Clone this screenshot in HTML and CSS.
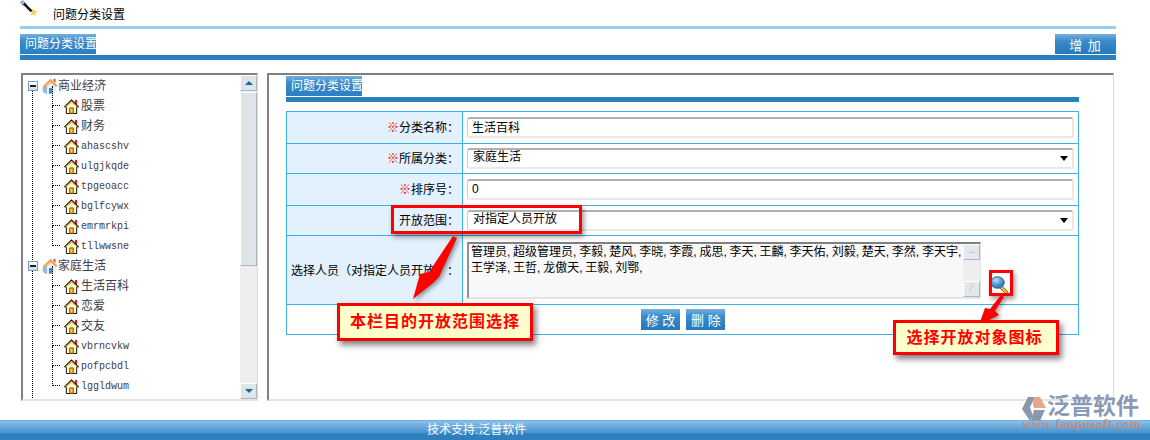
FILE: index.html
```html
<!DOCTYPE html>
<html lang="zh-CN">
<head>
    <meta charset="UTF-8">
    <title>问题分类设置</title>
    <link rel="stylesheet" href="styles.css">
</head>
<body>
    <svg class="icon-defs" width="0" height="0">
        <symbol id="house" viewBox="0 0 16 16">
            <path d="M11.500 1h2.500v5h-2.500z" fill="#d8202c"/>
            <path d="M2.500 8v7.500h11V8L8 3z" fill="#fff8d8" stroke="#000" stroke-width="1"/>
            <path d="M.5 8.800 8 1.300l7.500 7.500" fill="none" stroke="#000" stroke-width="1.600"/>
            <path d="M2 8.500 8 2.700l6 5.800" fill="none" stroke="#f9d040" stroke-width="1.200"/>
            <path d="M6 9.500h4v6H6z" fill="#f2a20c" stroke="#6a4400" stroke-width=".8"/>
            <path d="M7.200 11h1.600v2.500H7.200z" fill="#ffe878"/>
        </symbol>
        <symbol id="home" viewBox="0 0 16 16">
            <path d="M2 8v6.500L7 16l7-2V7L8 2.500z" fill="#e6effa"/>
            <path d="M2 8c-2 2.500-2 5 0 7l3 1V8z" fill="#8fbbe8"/>
            <path d="M7 16v-6h3.500v5z" fill="#3f86cf"/>
            <path d="M.5 8.500 8.500.8 15.500 7.500 14 9 8.500 4 2.500 10z" fill="#f2a050"/>
            <path d="M4 7.500 8.500 3.500l1 1L5 9z" fill="#f8c890"/>
            <path d="M11.500 1h2v4l-2-2z" fill="#d8503c"/>
        </symbol>
    </svg>

    <div class="page-title">
        <svg class="wand" width="18" height="18" viewBox="0 0 18 18">
            <path d="M.5 2.500 2.500.5 5.500 3 3 5.500z" fill="#a8c4e4" stroke="#506080" stroke-width=".6"/>
            <path d="M3 4.500l1.800-1.800 7.700 7.700-1.800 1.800z" fill="#101018"/>
            <path d="M13.500 8.500l1 2.500 3-.3-2.300 2 1 3-2.800-1.800-2.400 1.500.6-2.800z" fill="#f8c030"/>
            <path d="M13.300 11l.8 1.300 1-.2-1 1.200-1.300-.5z" fill="#fff2b0"/>
        </svg>
        <span>问题分类设置</span>
    </div>
    <div class="light-rule"></div>

    <div class="head-row">
        <div class="tab">问题分类设置</div>
        <button class="blue-btn add-btn">增 加</button>
    </div>
    <div class="blue-rule"></div>

    <div class="main">
        <div class="panel tree-panel">
            <div class="tree">
                <div class="tree-group">
                    <div class="tree-root">
                        <span class="minus"></span>
                        <svg class="root-icon"><use href="#home"/></svg>
                        <span>商业经济</span>
                    </div>
                    <div class="tree-item"><svg class="leaf-icon"><use href="#house"/></svg><span>股票</span></div>
                    <div class="tree-item"><svg class="leaf-icon"><use href="#house"/></svg><span>财务</span></div>
                    <div class="tree-item"><svg class="leaf-icon"><use href="#house"/></svg><span class="latin">ahascshv</span></div>
                    <div class="tree-item"><svg class="leaf-icon"><use href="#house"/></svg><span class="latin">ulgjkqde</span></div>
                    <div class="tree-item"><svg class="leaf-icon"><use href="#house"/></svg><span class="latin">tpgeoacc</span></div>
                    <div class="tree-item"><svg class="leaf-icon"><use href="#house"/></svg><span class="latin">bglfcywx</span></div>
                    <div class="tree-item"><svg class="leaf-icon"><use href="#house"/></svg><span class="latin">emrmrkpi</span></div>
                    <div class="tree-item"><svg class="leaf-icon"><use href="#house"/></svg><span class="latin">tllwwsne</span></div>
                </div>
                <div class="tree-group">
                    <div class="tree-root">
                        <span class="minus"></span>
                        <svg class="root-icon"><use href="#home"/></svg>
                        <span>家庭生活</span>
                    </div>
                    <div class="tree-item"><svg class="leaf-icon"><use href="#house"/></svg><span>生活百科</span></div>
                    <div class="tree-item"><svg class="leaf-icon"><use href="#house"/></svg><span>恋爱</span></div>
                    <div class="tree-item"><svg class="leaf-icon"><use href="#house"/></svg><span>交友</span></div>
                    <div class="tree-item"><svg class="leaf-icon"><use href="#house"/></svg><span class="latin">vbrncvkw</span></div>
                    <div class="tree-item"><svg class="leaf-icon"><use href="#house"/></svg><span class="latin">pofpcbdl</span></div>
                    <div class="tree-item"><svg class="leaf-icon"><use href="#house"/></svg><span class="latin">lggldwum</span></div>
                </div>
            </div>
            <div class="scrollbar">
                <div class="scroll-btn"><i class="arrow-up"></i></div>
                <div class="scroll-thumb"></div>
                <div class="scroll-btn"><i class="arrow-down"></i></div>
            </div>
        </div>

        <div class="panel form-panel">
            <div class="tab">问题分类设置</div>
            <div class="blue-rule"></div>
            <table class="form-table">
                <tr class="row-tall">
                    <th><em>※</em>分类名称：</th>
                    <td><input class="field" type="text" value="生活百科"></td>
                </tr>
                <tr class="row-short">
                    <th><em>※</em>所属分类：</th>
                    <td><div class="field select-field">家庭生活<i class="select-arrow"></i></div></td>
                </tr>
                <tr class="row-tall">
                    <th><em>※</em>排序号：</th>
                    <td><input class="field" type="text" value="0"></td>
                </tr>
                <tr class="row-short">
                    <th>开放范围：</th>
                    <td><div class="field select-field">对指定人员开放<i class="select-arrow"></i></div></td>
                </tr>
                <tr class="row-members">
                    <th>选择人员（对指定人员开放）：</th>
                    <td>
                        <div class="member-cell">
                            <div class="member-box">
                                <div class="member-text">管理员, 超级管理员, 李毅, 楚风, 李晓, 李霞, 成思, 李天, 王麟, 李天佑, 刘毅, 楚天, 李然, 李天宇,
王学泽, 王哲, 龙傲天, 王毅, 刘鄂,</div>
                                <div class="box-scroll">
                                    <div class="box-btn">–</div>
                                    <div class="box-btn">⁄</div>
                                </div>
                            </div>
                            <svg class="search-icon" width="18" height="18" viewBox="0 0 18 18">
                                <defs>
                                    <radialGradient id="lens" cx=".4" cy=".3" r=".75">
                                        <stop offset="0" stop-color="#c4e2f8"/>
                                        <stop offset=".55" stop-color="#4a96d4"/>
                                        <stop offset="1" stop-color="#2a6aa8"/>
                                    </radialGradient>
                                </defs>
                                <path d="M11.500 11.500l4.500 4.500" stroke="#6a5a20" stroke-width="3.600" stroke-linecap="round"/>
                                <path d="M11.500 11.500l4.500 4.500" stroke="#eec840" stroke-width="2.200" stroke-linecap="round"/>
                                <ellipse cx="7.500" cy="6.500" rx="6.800" ry="5.800" fill="url(#lens)" stroke="#56646e" stroke-width="1"/>
                            </svg>
                        </div>
                    </td>
                </tr>
                <tr class="row-short">
                    <td class="actions" colspan="2">
                        <button class="blue-btn small-btn">修 改</button>
                        <button class="blue-btn small-btn">删 除</button>
                    </td>
                </tr>
            </table>
        </div>
    </div>

    <div class="footer">技术支持:泛普软件</div>

    <!-- annotations drawn over the screenshot -->
    <div class="mark mark-range"></div>
    <div class="mark mark-icon"></div>
    <svg class="arrows" width="1150" height="440">
        <polygon points="453,236 457,238 439,277 433,283 413,299 420,274 429,272" fill="#f00"/>
        <polygon points="1001,295 1004,297 995,311 999,315 979,325 985,308 990,309" fill="#f00"/>
    </svg>
    <div class="callout callout-range">本栏目的开放范围选择</div>
    <div class="callout callout-icon">选择开放对象图标</div>

    <div class="logo">
        <svg class="logo-mark" width="26" height="26" viewBox="0 0 26 26">
            <path d="M7 1h7L9 11l3 9-3 5-8-12z" fill="#8a98ac"/>
            <path d="M14 1h5l6 11-12 0c-2-5-1-8 1-11z" fill="#e8a888"/>
            <path d="M13 14h11l-5 11H10z" fill="#8a98ac"/>
        </svg>
        <div class="logo-name">泛普软件</div>
        <div class="logo-url">www.fanpusoft.com</div>
    </div>
</body>
</html>
```

FILE: styles.css
```css
body {
    margin: 0;
    height: 440px;
    overflow: hidden;
    position: relative;
    background: #fff;
    color: #000;
    font-family: "Liberation Sans", "Noto Sans CJK SC", sans-serif;
    font-size: 12px;
    text-spacing-trim: space-all;
    font-kerning: none;
}
.icon-defs {
    position: absolute;
}
.page-title {
    height: 26px;
    padding-left: 20px;
    display: flex;
    align-items: flex-start;
}
.page-title span {
    margin-left: 15px;
    line-height: 31px;
}
.wand {
    display: block;
}
.light-rule {
    height: 3px;
    margin: 0 34px 0 20px;
    background: #9ccbf0;
}
.head-row {
    display: flex;
    justify-content: space-between;
    margin: 5px 34px 1px 20px;
}
.tab {
    width: 76px;
    height: 20px;
    padding-left: 5px;
    box-sizing: border-box;
    line-height: 21px;
    color: #fff;
    white-space: nowrap;
    background: linear-gradient(#74afdd, #3a8bc9 35%, #2a80c4);
}
.blue-rule {
    height: 5px;
    margin: 0 34px 0 20px;
    background: #2980c0;
}
.blue-btn {
    display: block;
    padding: 0;
    border: 0;
    color: #fff;
    font-family: inherit;
    background: linear-gradient(#74afdd, #3a8bc9 35%, #2479bd);
}
.add-btn {
    width: 61px;
    height: 20px;
    font-size: 13px;
    letter-spacing: 1px;
}
.main {
    display: flex;
    gap: 9px;
    margin: 13px 36px 0 21px;
    height: 328px;
}
.panel {
    box-sizing: border-box;
    border-top: 2px solid #808080;
    border-left: 2px solid #808080;
    border-right: 1px solid #dcdcdc;
    border-bottom: 2px solid #e4e4e4;
}
.tree-panel {
    width: 237px;
    flex: none;
    display: flex;
    overflow: hidden;
}
.tree {
    flex: 1;
    padding: 1px 0 0 5px;
    color: #3c3c4c;
    overflow: hidden;
}
.tree-group {
    position: relative;
}
.tree-group::before {
    content: "";
    position: absolute;
    left: 4px;
    top: 15px;
    bottom: -6px;
    border-left: 1px dotted #000;
}
.tree-root {
    height: 20px;
    display: flex;
    align-items: center;
    position: relative;
}
.tree-root span:last-child,
.tree-item span {
    margin-bottom: 4px;
}
.tree-item .latin {
    margin-bottom: 0;
}
.minus {
    width: 10px;
    height: 10px;
    box-sizing: border-box;
    border: 1px solid #7a9cc6;
    background: linear-gradient(#fff, #c8d8ec);
    position: relative;
    flex: none;
}
.minus::after {
    content: "";
    position: absolute;
    left: 1px;
    right: 1px;
    top: 3px;
    border-top: 2px solid #222;
}
.root-icon {
    width: 16px;
    height: 16px;
    margin-left: 4px;
    flex: none;
}
.tree-item {
    height: 20px;
    padding-left: 36px;
    display: flex;
    align-items: center;
    position: relative;
}
.tree-item::before {
    content: "";
    position: absolute;
    left: 24px;
    top: -10px;
    width: 8px;
    height: 20px;
    border-left: 1px dotted #000;
    border-bottom: 1px dotted #000;
    box-sizing: border-box;
}
.leaf-icon {
    width: 15px;
    height: 15px;
    margin-right: 2px;
    flex: none;
}
.latin {
    font-family: "Liberation Mono", monospace;
    font-size: 10px;
}
.scrollbar {
    width: 17px;
    flex: none;
    display: flex;
    flex-direction: column;
    gap: 1px;
    background: #eee;
}
.scroll-btn {
    height: 16px;
    box-sizing: border-box;
    display: flex;
    align-items: center;
    justify-content: center;
    background: #dfe4e8;
    border: 1px solid #fff;
    border-right-color: #a9b7c2;
    border-bottom-color: #a9b7c2;
}
.scroll-thumb {
    height: 174px;
    margin-bottom: auto;
    background: #dfe4e8;
    border: 1px solid #fff;
    border-right-color: #a9b7c2;
    border-bottom-color: #a9b7c2;
    box-sizing: border-box;
}
.arrow-up {
    border: 4px solid transparent;
    border-top: 0;
    border-bottom: 4px solid #0a6ba0;
}
.arrow-down {
    border: 4px solid transparent;
    border-bottom: 0;
    border-top: 4px solid #0a6ba0;
}
.form-panel {
    flex: 1;
    padding-top: 1px;
    padding-left: 17px;
}
.form-panel .blue-rule {
    margin: 1px 34px 0 0;
}
.form-table {
    width: 793px;
    margin-top: 9px;
    table-layout: fixed;
    border-collapse: collapse;
}
.form-table th,
.form-table td {
    border: 1px solid #3eb0e4;
    padding: 0;
}
.form-table th {
    width: 176px;
    padding: 0 3px 2px 0;
    box-sizing: border-box;
    text-align: right;
    font-weight: normal;
    white-space: nowrap;
    background: #e3f1fd;
}
.form-table td {
    padding-left: 4px;
}
.form-table em {
    font-style: normal;
    color: #f00;
}
.row-tall {
    height: 32px;
}
.row-short {
    height: 30px;
}
.row-members {
    height: 69px;
}
.field {
    display: block;
    width: 607px;
    height: 21px;
    padding: 0 4px 2px;
    box-sizing: border-box;
    border-style: solid;
    border-width: 2px 2px 2px 1px;
    border-color: #b0b0b0 #e8e8e8 #e8e8e8 #ccc;
    border-radius: 3px;
    background: #fff;
    font-family: inherit;
    font-size: 12px;
    color: #000;
    line-height: 15px;
    outline: 0;
}
.select-field {
    position: relative;
    padding-left: 5px;
}
.select-arrow {
    position: absolute;
    right: 4px;
    top: 6px;
    border: 4px solid transparent;
    border-bottom: 0;
    border-top: 5px solid #000;
}
.member-cell {
    display: flex;
    align-items: flex-end;
}
.member-box {
    width: 514px;
    height: 57px;
    box-sizing: border-box;
    display: flex;
    border-style: solid;
    border-width: 2px 1px 2px 2px;
    border-color: #808080 #e4e4e4 #e4e4e4 #909090;
    background: #f8f8f8;
}
.member-text {
    flex: 1;
    padding: 0 0 0 2px;
    line-height: 16px;
    white-space: pre;
    word-spacing: -.6px;
    overflow: hidden;
}
.box-scroll {
    width: 17px;
    flex: none;
    display: flex;
    flex-direction: column;
    justify-content: space-between;
    background: #eee;
}
.box-btn {
    height: 16px;
    box-sizing: border-box;
    text-align: center;
    line-height: 14px;
    font-size: 10px;
    color: #b4bcc4;
    background: #e4e8ec;
    border: 1px solid #fff;
    border-right-color: #a9b7c2;
    border-bottom-color: #a9b7c2;
}
.search-icon {
    margin: 0 0 5px 9px;
    flex: none;
}
.form-table .actions {
    padding-left: 354px;
}
.small-btn {
    display: inline-block;
    height: 21px;
    width: 39px;
    margin-right: 3px;
    font-size: 13px;
    vertical-align: middle;
}
.footer {
    position: absolute;
    left: 0;
    right: 0;
    bottom: 0;
    height: 20px;
    padding-left: 427px;
    box-sizing: border-box;
    border-top: 1px solid #6cacf0;
    line-height: 19px;
    color: #fff;
    background: linear-gradient(#8cc0e6, #4a94cf 60%, #2d7fc0 70%);
}
.mark {
    position: absolute;
    box-sizing: border-box;
    border: 3px solid #f00;
    box-shadow: 2px 3px 5px rgba(0, 0, 0, .4);
}
.mark-range {
    left: 391px;
    top: 205px;
    width: 191px;
    height: 29px;
}
.mark-icon {
    left: 989px;
    top: 270px;
    width: 24px;
    height: 26px;
}
.arrows {
    position: absolute;
    left: 0;
    top: 0;
    filter: drop-shadow(2px 2px 2px rgba(0, 0, 0, .4));
}
.callout {
    position: absolute;
    box-sizing: border-box;
    border: 3px solid #f00;
    background: #ffc;
    color: #f00;
    font-family: "Liberation Serif", "Noto Sans CJK SC", serif;
    font-size: 16px;
    font-weight: bold;
    letter-spacing: 1px;
    text-align: center;
    box-shadow: 3px 4px 6px rgba(0, 0, 0, .5);
}
.callout-range {
    left: 337px;
    top: 303px;
    width: 196px;
    height: 38px;
    line-height: 32px;
}
.callout-icon {
    left: 893px;
    top: 320px;
    width: 166px;
    height: 35px;
    padding-right: 3px;
    line-height: 29px;
}
.logo {
    position: absolute;
    left: 1021px;
    top: 395px;
    width: 129px;
    height: 45px;
}
.logo-mark {
    position: absolute;
    left: 0;
    top: 1px;
}
.logo-name {
    position: absolute;
    left: 26px;
    top: 0;
    font-size: 23px;
    font-weight: bold;
    line-height: 22px;
    color: #8a9ab5;
    white-space: nowrap;
}
.logo-url {
    position: absolute;
    left: 1px;
    top: 22px;
    font-family: "Liberation Serif", serif;
    font-size: 13px;
    font-weight: bold;
    letter-spacing: .5px;
    line-height: 14px;
    color: #c08c80;
    white-space: nowrap;
}
```
